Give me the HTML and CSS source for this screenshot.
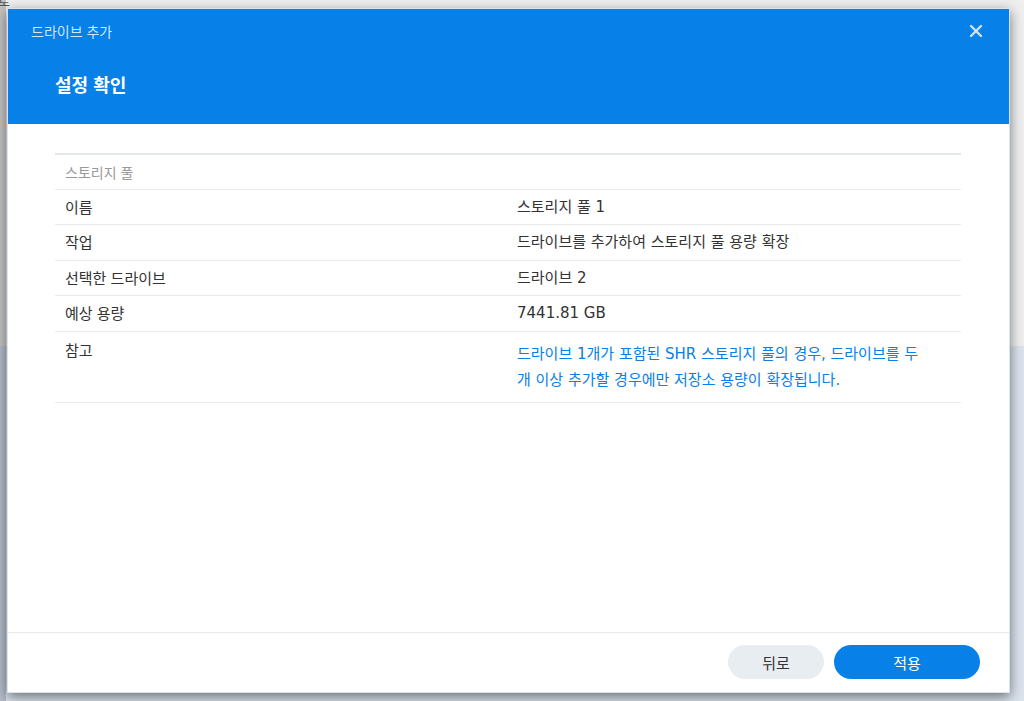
FILE: index.html
```html
<!DOCTYPE html>
<html lang="ko">
<head>
<meta charset="utf-8">
<title>드라이브 추가</title>
<link rel="stylesheet" href="styles.css">
</head>
<body>
<div class="backdrop">
  <span class="peek">로</span>
</div>
<div class="dialog">
  <header class="dlg-head">
    <div class="head-top">
      <span class="dlg-title">드라이브 추가</span>
      <button class="close" aria-label="닫기">
        <svg width="14" height="14" viewBox="0 0 14 14"><path d="M2 2 L12 12 M12 2 L2 12" stroke="#cfe2f7" stroke-width="2.4" stroke-linecap="round"/></svg>
      </button>
    </div>
    <h1 class="dlg-sub">설정 확인</h1>
  </header>
  <main class="dlg-body">
    <table class="summary">
      <thead>
        <tr><th colspan="2">스토리지 풀</th></tr>
      </thead>
      <tbody>
        <tr><td class="k">이름</td><td>스토리지 풀 1</td></tr>
        <tr><td class="k">작업</td><td>드라이브를 추가하여 스토리지 풀 용량 확장</td></tr>
        <tr><td class="k">선택한 드라이브</td><td>드라이브 2</td></tr>
        <tr><td class="k">예상 용량</td><td>7441.81 GB</td></tr>
        <tr class="note-row"><td class="k">참고</td><td class="note">드라이브 1개가 포함된 SHR 스토리지 풀의 경우, 드라이브를 두<br>개 이상 추가할 경우에만 저장소 용량이 확장됩니다.</td></tr>
      </tbody>
    </table>
  </main>
  <footer class="dlg-foot">
    <button class="btn btn-back">뒤로</button>
    <button class="btn btn-apply">적용</button>
  </footer>
</div>
</body>
</html>
```
FILE: styles.css
```css
* { box-sizing: border-box; }
html, body { margin: 0; padding: 0; }
body {
  width: 1024px;
  height: 701px;
  overflow: hidden;
  position: relative;
  font-family: "DejaVu Sans", "Noto Sans CJK KR", sans-serif;
  background:
    linear-gradient(to right, #c3c3c3 0 6px, transparent 6px) 0 0 / 100% 346px no-repeat,
    linear-gradient(to right, #b3bcc8 0 6px, transparent 6px) 0 346px / 100% 355px no-repeat,
    linear-gradient(to bottom, #efefef 0 346px, #dbe3ed 346px);
}
.backdrop {
  position: absolute;
  inset: 0;
}
.peek {
  position: absolute;
  left: -2px;
  top: -9px;
  font-size: 13px;
  color: #555;
  font-family: "Noto Sans CJK KR", sans-serif;
}
.dialog {
  position: absolute;
  left: 7px;
  top: 8px;
  width: 1003px;
  height: 685px;
  background: #fff;
  border: 1px solid #d6e4f2;
  box-shadow: 0 4px 12px rgba(0, 0, 0, 0.5);
  display: flex;
  flex-direction: column;
}
.dlg-head {
  background: #0780e8;
  height: 115px;
  padding: 13px 0 0 23px;
  color: #fff;
  flex: none;
}
.head-top {
  display: flex;
  align-items: center;
  justify-content: space-between;
  height: 18px;
  padding-right: 26px;
}
.dlg-title {
  font-family: "Noto Sans CJK KR", sans-serif;
  font-size: 14px;
  line-height: 18px;
  color: #d3e6fa;
}
.close {
  background: none;
  border: 0;
  padding: 0;
  width: 14px;
  height: 14px;
  display: flex;
  cursor: pointer;
}
.dlg-sub {
  margin: 31px 0 0 24px;
  font-family: "Noto Sans CJK KR", sans-serif;
  font-size: 18px;
  line-height: 26px;
  font-weight: 700;
  color: #fff;
}
.dlg-body {
  flex: 1;
  padding: 29px 48px 0 47px;
}
.summary {
  width: 100%;
  border-collapse: collapse;
  font-size: 15px;
  color: #333;
}
.summary th {
  text-align: left;
  font-weight: 400;
  font-size: 14px;
  color: #999;
  font-family: "Noto Sans CJK KR", sans-serif;
  border-top: 2px solid #e3e7eb;
  border-bottom: 1px solid #e6ebf0;
  height: 35px;
  padding: 0 10px;
}
.summary td {
  height: 35.5px;
  padding: 0 10px;
  border-bottom: 1px solid #e6ebf0;
  line-height: 18px;
  vertical-align: middle;
  font-family: "DejaVu Sans", "Noto Sans CJK KR", sans-serif;
}
.summary td.k {
  width: 452px;
  font-family: "Noto Sans CJK KR", sans-serif;
}
.note-row td {
  vertical-align: top;
  height: 70px;
  padding-top: 9px;
  padding-bottom: 9px;
}
.summary td.note {
  color: #0780e8;
  line-height: 26px;
  padding-top: 9px;
}
.dlg-foot {
  flex: none;
  height: 60px;
  border-top: 1px solid #e6ebf0;
  display: flex;
  justify-content: flex-end;
  align-items: center;
  gap: 10px;
  padding: 0 29px 1px 0;
}
.btn {
  height: 34px;
  border-radius: 17px;
  border: 0;
  font-family: "Noto Sans CJK KR", sans-serif;
  font-size: 15px;
  cursor: pointer;
}
.btn-back {
  width: 96px;
  background: #e8edf2;
  color: #333;
}
.btn-apply {
  width: 146px;
  background: #0780e8;
  color: #fff;
}
```
